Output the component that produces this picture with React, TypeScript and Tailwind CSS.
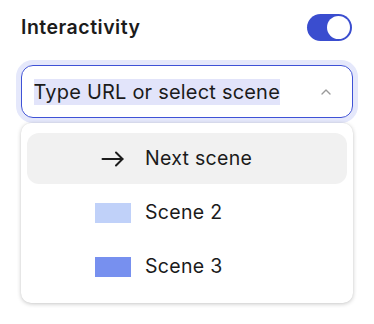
import { ChevronUp } from 'lucide-react';

const scenes = [
  { id: 2, label: 'Scene 2', swatch: 'bg-[#c0d1f9]' },
  { id: 3, label: 'Scene 3', swatch: 'bg-[#7790ef]' },
];

function Toggle() {
  return (
    <div className="w-[45px] h-[27px] rounded-full bg-[#3a4dcf] flex items-center justify-end pr-[2px]">
      <div className="w-[23px] h-[23px] rounded-full bg-white" />
    </div>
  );
}

function ArrowIcon() {
  return (
    <svg width="24" height="16" viewBox="0 0 24 16" fill="none" stroke="#1c1c1c" strokeWidth="2" strokeLinecap="round" strokeLinejoin="round">
      <path d="M1.5 8h20" />
      <path d="M15 1.5 21.5 8 15 14.5" />
    </svg>
  );
}

export default function App() {
  return (
    <div className="w-[374px] h-[324px] bg-white px-[21px] pt-[14px] font-['Inter',sans-serif] text-[#1b1b1b]">
      <div className="flex items-center justify-between h-[27px] pr-[1px]">
        <span className="text-[19.5px] font-semibold tracking-[0.5px]">Interactivity</span>
        <Toggle />
      </div>

      <div className="mt-[24px] h-[53px] rounded-[12px] border-[1.5px] border-[#3f52d6] ring-[5px] ring-[#e5e8fb] flex items-center justify-between pl-[11.5px] pr-[18px]">
        <span className="text-[20px] leading-[26px] tracking-[0.2px] bg-[#e2e4fa]">Type URL or select scene</span>
        <ChevronUp className="w-[16px] h-[16px] text-[#9a9a9a]" strokeWidth={2} />
      </div>

      <div className="mt-[5px] rounded-[10px] bg-white shadow-[0_1px_4px_rgba(0,0,0,0.22),0_0_1px_rgba(0,0,0,0.08)] px-[6px] pt-[10px] pb-[11px] flex flex-col gap-[3px]">
        <div className="h-[51px] rounded-[12px] bg-[#f1f1f1] flex items-center pl-[68px]">
          <div className="w-[36px] flex justify-center">
            <ArrowIcon />
          </div>
          <span className="ml-[14px] text-[19.5px] tracking-[0.3px]">Next scene</span>
        </div>
        {scenes.map((s) => (
          <div key={s.id} className="h-[51px] flex items-center pl-[68px]">
            <div className={`w-[36px] h-[20px] ${s.swatch}`} />
            <span className="ml-[14px] text-[19.5px] tracking-[0.3px]">{s.label}</span>
          </div>
        ))}
      </div>
    </div>
  );
}
